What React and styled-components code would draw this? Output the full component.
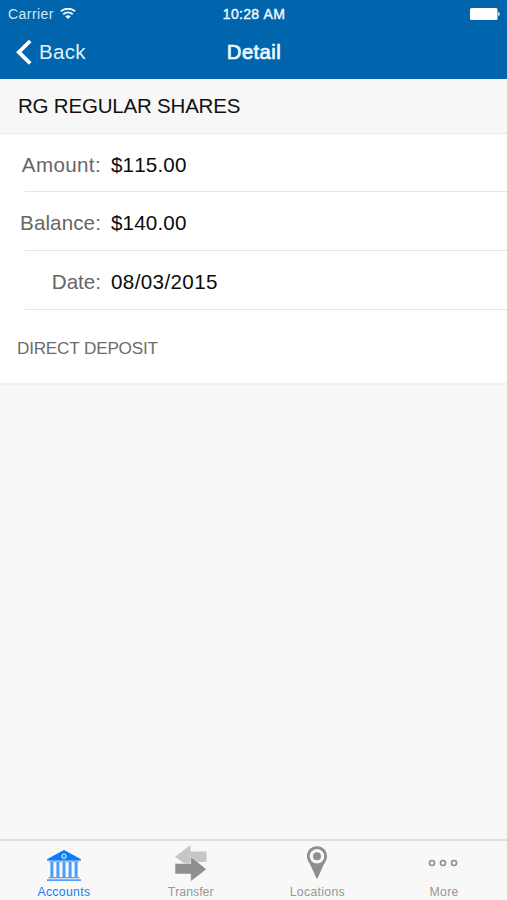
import React, { useState } from "react";
import styled, { createGlobalStyle } from "styled-components";

const GlobalStyle = createGlobalStyle`
	* {
		box-sizing: border-box;
	}
	body {
		margin: 0;
		font-family: "Liberation Sans", Arial, sans-serif;
		font-kerning: none;
	}
	svg {
		display: block;
	}
`;

const Container = styled.div`
	display: flex;
	flex-direction: column;
	height: 100vh;
	min-height: 900px;
	background-color: #f7f7f7;
`;

const Header = styled.header`
	height: 79px;
	background-color: #0065ad;
	color: #eef9ff;
`;

const StatusBar = styled.div`
	display: grid;
	grid-template-columns: 1fr auto 1fr;
	align-items: center;
	height: 26px;
	padding: 1px 7px 0 8px;
	font-size: 14px;
	line-height: 16px;
`;

const Carrier = styled.div`
	display: flex;
	align-items: center;
	gap: 6px;
	letter-spacing: 0.45px;
	color: #cfe9fb;
`;

const Clock = styled.span`
	letter-spacing: 0.3px;
	-webkit-text-stroke: 0.4px currentColor;
`;

const Battery = styled.div`
	justify-self: end;
`;

const NavBar = styled.div`
	display: grid;
	grid-template-columns: 1fr auto 1fr;
	align-items: center;
	height: 52px;
	padding: 0 15px 0 16px;
`;

const BackButton = styled.button`
	display: flex;
	align-items: center;
	gap: 7px;
	border: none;
	padding: 0;
	background: none;
	font: inherit;
	font-size: 20.5px;
	letter-spacing: 0.3px;
	line-height: 24px;
	color: #dff2ff;
	cursor: pointer;
`;

const Title = styled.h1`
	margin: 0;
	font-size: 20.3px;
	font-weight: 400;
	line-height: 24px;
	letter-spacing: 0.4px;
	-webkit-text-stroke: 0.7px currentColor;
`;

const AccountName = styled.h2`
	display: flex;
	align-items: center;
	height: 55px;
	margin: 0;
	padding: 0 18px;
	border-bottom: 1px solid #ebebeb;
	font-size: 20.5px;
	font-weight: 400;
	letter-spacing: -0.2px;
	color: #111;
`;

const Details = styled.main`
	height: 251px;
	background-color: #fff;
	border-bottom: 2px solid #f0f0f0;
`;

const Row = styled.div`
	display: flex;
	align-items: center;
	height: ${({ $height }) => $height}px;
	margin-left: 25px;
	padding-top: 4px;
	border-bottom: 1px solid #e5e5e5;
	font-size: 20.6px;
	line-height: 24px;
`;

const Label = styled.span`
	display: flex;
	justify-content: flex-end;
	width: 76px;
	margin-right: 10px;
	white-space: nowrap;
	letter-spacing: ${({ $spacing }) => $spacing}px;
	color: #666;
`;

const Value = styled.span`
	letter-spacing: ${({ $spacing }) => $spacing}px;
	color: #0c0c0c;
`;

const Note = styled.div`
	padding: 28px 17px 0;
	font-size: 17.2px;
	line-height: 20px;
	letter-spacing: -0.25px;
	color: #6c6c6c;
`;

const TabBar = styled.nav`
	display: flex;
	height: 61px;
	margin-top: auto;
	border-top: 2px solid #dedede;
	background-color: #f8f8f8;
`;

const Tab = styled.button`
	display: flex;
	flex: 1;
	flex-direction: column;
	align-items: center;
	border: none;
	padding: 4px 0 0 1px;
	background: none;
	font: inherit;
	font-size: 12.3px;
	line-height: 14px;
	letter-spacing: ${({ $spacing }) => $spacing}px;
	color: ${({ $active }) => ($active ? "#1a80f8" : "#979797")};
	cursor: pointer;
`;

const TabIcon = styled.span`
	display: flex;
	height: 40px;
`;

const WifiIcon = () => (
	<svg width="16" height="12" viewBox="0 0 16 12" fill="none" stroke="#e8f7ff">
		<path d="M0.8 3.4C5 -0.2 11 -0.2 15.2 3.4" strokeWidth="1.9" />
		<path d="M3.2 6.2C6 3.8 10 3.8 12.8 6.2" strokeWidth="1.9" />
		<path d="M5.2 8.2C7 6.8 9 6.8 10.8 8.2L8 11Z" fill="#e8f7ff" stroke="none" />
	</svg>
);

const BatteryIcon = () => (
	<svg width="30" height="12" viewBox="0 0 30 12" fill="#fff">
		<rect x="0" y="0" width="27.5" height="12" rx="1.5" />
		<path d="M28.3 4C30.3 4.5 30.3 7.5 28.3 8Z" />
	</svg>
);

const BackIcon = () => (
	<svg width="16" height="26" viewBox="0 0 16 26" fill="none" stroke="#fff">
		<path d="M14.2 2L2.8 13.2L14.2 24.4" strokeWidth="3.8" />
	</svg>
);

const BankIcon = () => (
	<svg width="36" height="40" viewBox="0 0 36 40" fill="#0a7bfa">
		<path d="M18 5L35 14.2V15.6H1V14.2Z" />
		<circle cx="18" cy="11.2" r="2" stroke="#b9dcff" strokeWidth="1.3" />
		<path
			d="M4.4 17.1h3V32h-3zM10.4 17.1h3V32h-3zM16.5 17.1h3V32h-3zM22.6 17.1h3V32h-3zM28.6 17.1h3V32h-3z"
			opacity="0.72"
		/>
		<path d="M3 15.6h30v1.5H3z" opacity="0.5" />
		<path d="M2.5 32h31v1.3h-31zM1 34.2h34v1.8H1z" opacity="0.7" />
	</svg>
);

const TransferIcon = () => (
	<svg width="33" height="40" viewBox="0 0 33 40">
		<path d="M1 11.8L16.6 0V6.6H32.5V17H16.6V23Z" fill="#c6c6c6" />
		<path
			d="M1 18.5H16.7V11.5L32.5 24.2L16.7 36.5V29H1Z"
			fill="#8e8e8e"
			stroke="#f8f8f8"
			strokeWidth="0.5"
		/>
	</svg>
);

const PinIcon = () => (
	<svg width="22" height="40" viewBox="0 0 22 40">
		<path
			d="M11 1.2C5.2 1.2 1 5.6 1 11C1 15.3 3.3 17.5 4.9 21L10.5 33.6H11.5L17.1 21C18.7 17.5 21 15.3 21 11C21 5.6 16.8 1.2 11 1.2Z"
			fill="#8e8e8e"
		/>
		<circle cx="11" cy="11.3" r="7.3" fill="#f8f8f8" />
		<circle cx="11" cy="11.3" r="4" fill="#8e8e8e" />
	</svg>
);

const MoreIcon = () => (
	<svg width="32" height="40" viewBox="0 0 32 40" fill="none" stroke="#8e8e8e" strokeWidth="1.6">
		<circle cx="4" cy="18" r="2.5" />
		<circle cx="15" cy="18" r="2.5" />
		<circle cx="26" cy="18" r="2.5" />
	</svg>
);

const rows = [
	{ label: "Amount:", value: "$115.00", height: 58, labelSpacing: 0.35, valueSpacing: 0.15 },
	{ label: "Balance:", value: "$140.00", height: 59, labelSpacing: 0.1, valueSpacing: 0.15 },
	{ label: "Date:", value: "08/03/2015", height: 59, labelSpacing: 0, valueSpacing: 0.38 },
];

const tabs = [
	{ name: "Accounts", icon: <BankIcon />, spacing: 0.3 },
	{ name: "Transfer", icon: <TransferIcon />, spacing: 0 },
	{ name: "Locations", icon: <PinIcon />, spacing: 0.3 },
	{ name: "More", icon: <MoreIcon />, spacing: 0.3 },
];

const App = () => {
	const [active, setActive] = useState("Accounts");

	return (
		<Container>
			<GlobalStyle />
			<Header>
				<StatusBar>
					<Carrier>
						Carrier
						<WifiIcon />
					</Carrier>
					<Clock>10:28 AM</Clock>
					<Battery>
						<BatteryIcon />
					</Battery>
				</StatusBar>
				<NavBar>
					<BackButton>
						<BackIcon />
						Back
					</BackButton>
					<Title>Detail</Title>
				</NavBar>
			</Header>
			<AccountName>RG REGULAR SHARES</AccountName>
			<Details>
				{rows.map((row) => (
					<Row key={row.label} $height={row.height}>
						<Label $spacing={row.labelSpacing}>{row.label}</Label>
						<Value $spacing={row.valueSpacing}>{row.value}</Value>
					</Row>
				))}
				<Note>DIRECT DEPOSIT</Note>
			</Details>
			<TabBar>
				{tabs.map((tab) => (
					<Tab
						key={tab.name}
						$active={tab.name === active}
						$spacing={tab.spacing}
						onClick={() => setActive(tab.name)}
					>
						<TabIcon>{tab.icon}</TabIcon>
						{tab.name}
					</Tab>
				))}
			</TabBar>
		</Container>
	);
};

export default App;
